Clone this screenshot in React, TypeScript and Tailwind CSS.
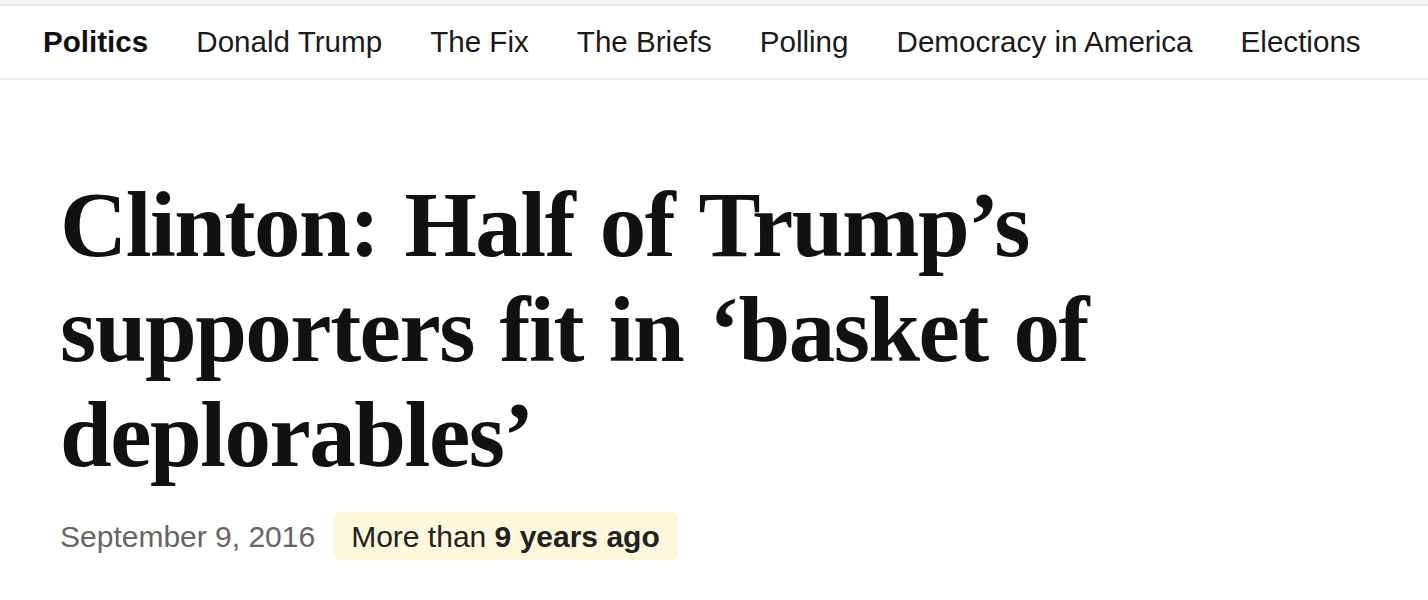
const NAV_ITEMS = [
  'Donald Trump',
  'The Fix',
  'The Briefs',
  'Polling',
  'Democracy in America',
  'Elections',
];

export default function App() {
  return (
    <div className="min-h-[600px] bg-white text-[#111]">
      <div className="h-1 bg-[#f5f5f5]" />
      <nav className="flex h-[76px] items-center gap-[48px] border-y-2 border-y-[#ececec] pl-[43px] font-['Liberation_Sans',Arial,sans-serif] text-[29.6px]">
        <a className="font-bold text-[#111]">Politics</a>
        {NAV_ITEMS.map((item) => (
          <a key={item} className="text-[#1a1a1a]">
            {item}
          </a>
        ))}
      </nav>

      <main className="px-[60px] pt-[92px]">
        <h1 className="max-w-[1140px] font-['Liberation_Serif','Times_New_Roman',serif] text-[93px] leading-[105px] font-bold tracking-[-1.5px] [word-spacing:4px] text-[#111]">
          Clinton: Half of Trump’s supporters fit in ‘basket of deplorables’
        </h1>
        <div className="mt-[25px] flex items-center gap-[18px] font-['Liberation_Sans',Arial,sans-serif] text-[30px]">
          <span className="text-[#666]">September 9, 2016</span>
          <span className="flex h-[48px] items-center rounded-[7px] bg-[#fdf8dc] px-[18px] text-[#222]">
            More than&nbsp;<b className="font-bold">9 years ago</b>
          </span>
        </div>
      </main>
    </div>
  );
}
